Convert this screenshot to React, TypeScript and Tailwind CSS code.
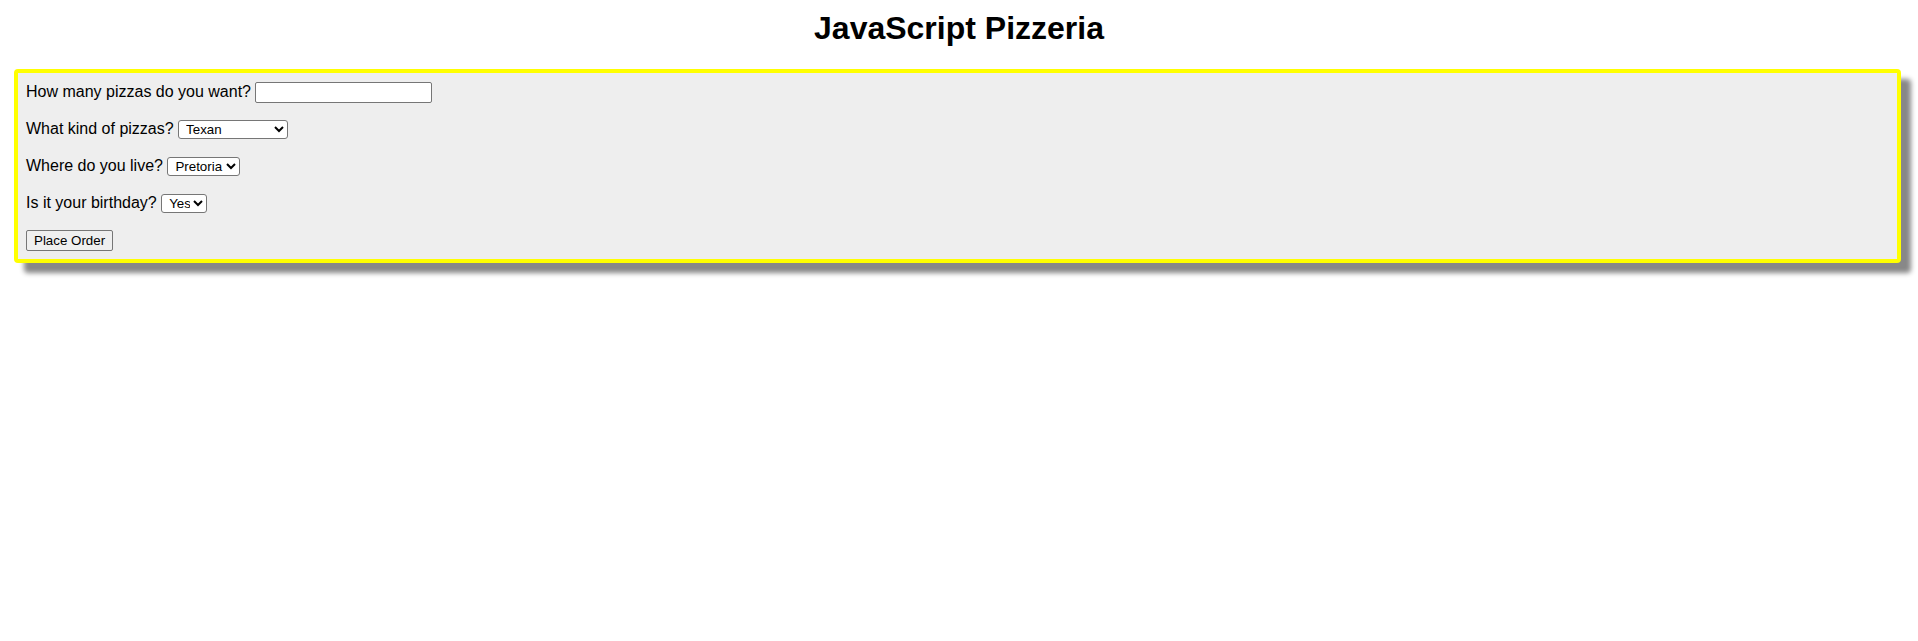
export default function App() {
  const fieldSel =
    "h-[19px] border border-[#767676] rounded-[3px] bg-white text-[13.33px] leading-[15px] pl-[3px] align-baseline text-black";

  return (
    <div className="min-h-screen bg-white text-black font-['Liberation_Sans',Arial,sans-serif] text-base">
      <h1 className="pt-[10px] text-center text-[32px] font-bold leading-[37px]">JavaScript Pizzeria</h1>

      <form
        className="mt-[22px] ml-[14px] mr-[17px] border-4 border-[#ffff00] rounded-[4px] bg-[#eeeeee] p-2 shadow-[10px_10px_5px_#888888]"
        onSubmit={(e) => e.preventDefault()}
      >
        <div className="mb-[15px] leading-[21px]">
          How many pizzas do you want?{" "}
          <input
            type="text"
            className="w-[177px] h-[21px] border border-[#767676] rounded-[2px] bg-white px-[2px] text-[13.33px] align-baseline"
          />
        </div>

        <div className="mb-4 leading-[21px]">
          What kind of pizzas?{" "}
          <select className={`${fieldSel} w-[110px]`} defaultValue="Texan">
            <option>Texan</option>
            <option>Margherita</option>
            <option>Hawaiian</option>
          </select>
        </div>

        <div className="mb-4 leading-[21px]">
          Where do you live?{" "}
          <select className={`${fieldSel} w-[73px]`} defaultValue="Pretoria">
            <option>Pretoria</option>
            <option>Durban</option>
          </select>
        </div>

        <div className="mb-4 leading-[21px]">
          Is it your birthday?{" "}
          <select className={`${fieldSel} w-[46px]`} defaultValue="Yes">
            <option>Yes</option>
            <option>No</option>
          </select>
        </div>

        <div className="leading-[21px]">
          <button
            type="submit"
            className="h-[21px] px-[7px] border border-[#767676] rounded-[2px] bg-[#efefef] text-[13.33px] leading-[15px]"
          >
            Place Order
          </button>
        </div>
      </form>
    </div>
  );
}
